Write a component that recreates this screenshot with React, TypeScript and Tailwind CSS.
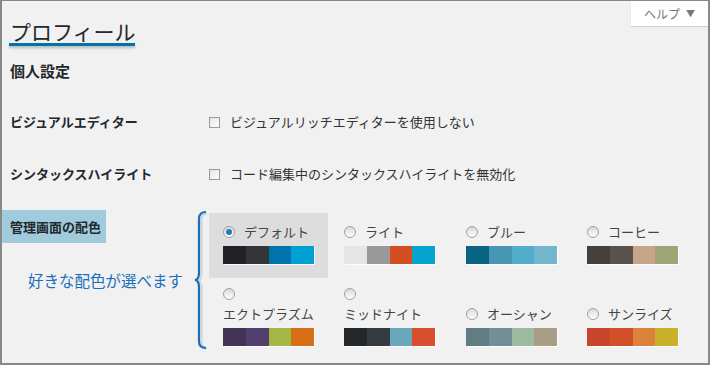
import React from "react";

const font = { fontFamily: '"Noto Sans CJK JP", "Noto Sans", sans-serif' };

type Scheme = { name: string; colors: string[]; selected?: boolean; stacked?: boolean };

const row1: Scheme[] = [
  { name: "デフォルト", colors: ["#222226", "#333639", "#0073aa", "#00a0d2"], selected: true },
  { name: "ライト", colors: ["#e5e5e5", "#999999", "#d54e21", "#04a4cc"] },
  { name: "ブルー", colors: ["#096484", "#4796b3", "#52accc", "#74b6ce"] },
  { name: "コーヒー", colors: ["#46403c", "#59524c", "#c7a589", "#9ea476"] },
];
const row2: Scheme[] = [
  { name: "エクトプラズム", colors: ["#413256", "#523f6d", "#a3b745", "#d46f15"], stacked: true },
  { name: "ミッドナイト", colors: ["#25282b", "#363b3f", "#69a8bb", "#d94e2c"], stacked: true },
  { name: "オーシャン", colors: ["#627c83", "#738e96", "#9ebaa0", "#aa9d88"] },
  { name: "サンライズ", colors: ["#c9452c", "#d24f28", "#dd823b", "#c9b12a"] },
];

function Radio({ checked }: { checked?: boolean }) {
  return (
    <span className="w-[12px] h-[12px] rounded-full border border-[#a0a0a0] bg-gradient-to-b from-[#d8d8d8] to-[#ffffff] flex items-center justify-center shrink-0">
      {checked && <span className="w-[6px] h-[6px] rounded-full bg-[#1e7cc0]" />}
    </span>
  );
}

function Swatches({ colors }: { colors: string[] }) {
  return (
    <div className="flex w-[91px] h-[18px] mt-[7px] shadow-[1px_1px_0_rgba(255,255,255,0.9)]">
      {colors.map((c, i) => (
        <div key={i} className="flex-1 h-full" style={{ backgroundColor: c }} />
      ))}
    </div>
  );
}

function Option({ s, top }: { s: Scheme; top: string }) {
  return (
    <div className={`w-[119px] px-[14px] pb-[14px] ${top} ${s.selected ? "bg-[#dddddd]" : ""}`}>
      {s.stacked ? (
        <>
          <div className="h-[12px] flex items-center">
            <Radio />
          </div>
          <div className="mt-[7px] text-[13px] leading-[14px] text-[#444] whitespace-nowrap">{s.name}</div>
        </>
      ) : (
        <div className="h-[14px] flex items-center gap-[9px]">
          <Radio checked={s.selected} />
          <span className="text-[13px] leading-[14px] text-[#444] whitespace-nowrap">{s.name}</span>
        </div>
      )}
      <Swatches colors={s.colors} />
    </div>
  );
}

function Checkbox() {
  return (
    <span className="w-[11px] h-[11px] border border-[#9a9a9a] bg-gradient-to-br from-[#e4e4e4] to-[#ffffff] shrink-0" />
  );
}

function Brace() {
  return (
    <svg width="14" height="140" viewBox="0 0 14 140" className="shrink-0">
      <path
        d="M13 2.5 Q7 2.5 7 9 L7 63 Q7 69.5 3 70 Q7 70.5 7 77 L7 131 Q7 137.5 13 137.5"
        fill="none"
        stroke="#d4d8dc"
        strokeWidth="2.5"
        transform="translate(1.5 1)"
      />
      <path
        d="M13 2 Q6 2 6 9 L6 63 Q6 69.5 2 70 Q6 70.5 6 77 L6 131 Q6 138 13 138"
        fill="none"
        stroke="#1b6fba"
        strokeWidth="2.2"
      />
    </svg>
  );
}

export default function App() {
  return (
    <div style={font} className="relative w-[710px] h-[365px] bg-[#f1f1f1] border-t border-x-2 border-b-2 border-[#888888] overflow-hidden">
      <div className="absolute top-0 right-0 w-[77px] h-[25px] bg-white shadow-[0_1px_1px_rgba(0,0,0,0.12)] flex items-center justify-center gap-[6px] text-[12px] text-[#72777c]">
        <span>ヘルプ</span>
        <span className="text-[9px]">▼</span>
      </div>

      <div className="pl-[8px] pt-[17px]">
        <div className="text-[21px] leading-[26px] text-[#23282d]">プロフィール</div>
        <div className="-ml-[1px] -mt-[1px] w-[126px] h-[3px] bg-[#0073aa] shadow-[0_2px_3px_rgba(0,0,0,0.25)]" />
        <div className="mt-[15px] text-[15px] leading-[20px] font-bold text-[#23282d]">個人設定</div>
      </div>

      <div className="mt-[21px] flex items-center h-[40px]">
        <div className="w-[207px] pl-[8px] text-[13px] font-bold text-[#23282d]">ビジュアルエディター</div>
        <div className="flex items-center gap-[10px]">
          <Checkbox />
          <span className="text-[13px] text-[#333]">ビジュアルリッチエディターを使用しない</span>
        </div>
      </div>

      <div className="mt-[12px] flex items-center h-[40px]">
        <div className="w-[207px] pl-[8px] text-[13px] font-bold text-[#23282d]">シンタックスハイライト</div>
        <div className="flex items-center gap-[10px]">
          <Checkbox />
          <span className="text-[13px] text-[#333]">コード編集中のシンタックスハイライトを無効化</span>
        </div>
      </div>

      <div className="mt-[16px] flex">
        <div className="w-[207px] flex">
          <div className="w-[191px]">
            <div className="w-[104px] h-[33px] bg-[#9fcbdc] flex items-center pl-[8px] text-[13px] font-bold text-[#23282d]">
              管理画面の配色
            </div>
            <div className="mt-[26px] ml-[26px] text-[15.5px] leading-[22px] text-[#1b6fba] whitespace-nowrap">
              好きな配色が選べます
            </div>
          </div>
          <Brace />
        </div>
        <div className="mt-[3px]">
          <div className="grid grid-cols-[121px_122px_121px_122px]">
            {row1.map((s) => (
              <Option key={s.name} s={s} top="pt-[12px]" />
            ))}
          </div>
          <div className="mt-[3px] grid grid-cols-[121px_122px_121px_122px] items-end">
            {row2.map((s) => (
              <Option key={s.name} s={s} top="pt-[7px]" />
            ))}
          </div>
        </div>
      </div>
    </div>
  );
}
